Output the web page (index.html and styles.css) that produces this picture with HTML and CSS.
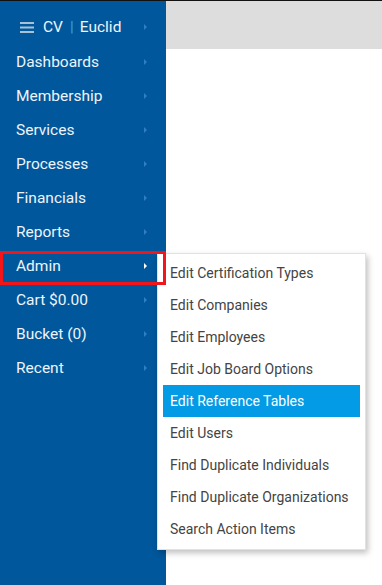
FILE: index.html
```html
<!DOCTYPE html>
<html lang="en">
<head>
    <meta charset="UTF-8">
    <meta name="viewport" content="width=device-width, initial-scale=1.0">
    <title>CV | Euclid</title>
    <link rel="stylesheet" href="styles.css">
</head>
<body>
    <div class="app">
        <nav class="sidebar">
            <div class="brand">
                <span class="hamburger">
                    <svg width="14" height="11" viewBox="0 0 14 11"><rect y="0" width="14" height="2"/><rect y="4.5" width="14" height="2"/><rect y="9" width="14" height="2"/></svg>
                </span>
                <span class="brand-name">CV</span>
                <span class="brand-sep">|</span>
                <span class="brand-name">Euclid</span>
                <span class="caret"></span>
            </div>
            <ul class="nav-list">
                <li class="nav-item">Dashboards<span class="caret"></span></li>
                <li class="nav-item">Membership<span class="caret"></span></li>
                <li class="nav-item">Services<span class="caret"></span></li>
                <li class="nav-item">Processes<span class="caret"></span></li>
                <li class="nav-item">Financials<span class="caret"></span></li>
                <li class="nav-item">Reports<span class="caret"></span></li>
                <li class="nav-item active">Admin<span class="caret"></span>
                    <ul class="submenu">
                        <li>Edit Certification Types</li>
                        <li>Edit Companies</li>
                        <li>Edit Employees</li>
                        <li>Edit Job Board Options</li>
                        <li class="selected">Edit Reference Tables</li>
                        <li>Edit Users</li>
                        <li>Find Duplicate Individuals</li>
                        <li>Find Duplicate Organizations</li>
                        <li>Search Action Items</li>
                    </ul>
                </li>
                <li class="nav-item">Cart $0.00<span class="caret"></span></li>
                <li class="nav-item">Bucket (0)<span class="caret"></span></li>
                <li class="nav-item">Recent<span class="caret"></span></li>
            </ul>
        </nav>
        <main class="content">
            <div class="topbar"></div>
        </main>
    </div>
</body>
</html>
```

FILE: styles.css
```css
html, body {
    margin: 0;
    padding: 0;
    height: 100%;
}

body {
    font-family: Roboto, "Liberation Sans", sans-serif;
    background-color: #ffffff;
    border-top: 1px solid #111111; /* thin dark line above everything */
    box-sizing: border-box;
}

.app {
    display: flex;
    height: 100%;
}

/* left navigation */
.sidebar {
    width: 166px;
    flex-shrink: 0;
    background-color: #01579b;
    color: #eef4fa;
}

.brand {
    display: flex;
    align-items: center;
    height: 44px;
    padding: 8px 0 0 20px;
    box-sizing: border-box;
    position: relative;
    font-size: 15.5px;
}

.brand .caret {
    margin-top: 1px;
}

.hamburger svg {
    display: block;
    fill: #a9c1d6;
    margin-right: 9px;
}

.brand-sep {
    color: #29a3e8;
    margin: 0 6px 0 7px;
}

.nav-list {
    list-style: none;
    margin: 0;
    padding: 0;
}

.nav-item {
    position: relative;
    height: 34px;
    line-height: 34px;
    padding-left: 16px;
    font-size: 15.5px;
}

/* small triangle on the right of each row */
.caret {
    position: absolute;
    left: 144px;
    top: 50%;
    margin-top: -3px;
    width: 0;
    height: 0;
    border-top: 3px solid transparent;
    border-bottom: 3px solid transparent;
    border-left: 3px solid #2f7fc4;
}

.nav-item.active .caret {
    border-left-color: #ffffff;
}

/* red marker around the open item */
.nav-item.active::after {
    content: "";
    position: absolute;
    top: 2px;
    left: 0;
    width: 166px;
    height: 34px;
    border: 3px solid #f2161b;
    box-sizing: border-box;
    z-index: 3;
}

/* popup menu */
.submenu {
    position: absolute;
    top: 4px;
    left: 157px;
    width: 209px;
    margin: 0;
    padding: 3px 5px 4px;
    box-sizing: border-box;
    list-style: none;
    background-color: #ffffff;
    border: 1px solid #e2e2e2;
    box-shadow: 2px 3px 6px rgba(0, 0, 0, 0.25);
    z-index: 2;
}

.submenu li {
    height: 32px;
    line-height: 32px;
    padding-left: 7px;
    font-size: 14px;
    color: #444444;
    white-space: nowrap;
}

.submenu li.selected {
    background-color: #039be5;
    color: #ffffff;
}

/* right side */
.content {
    flex: 1;
}

.topbar {
    height: 48px;
    background-color: #dddddd;
}
```
